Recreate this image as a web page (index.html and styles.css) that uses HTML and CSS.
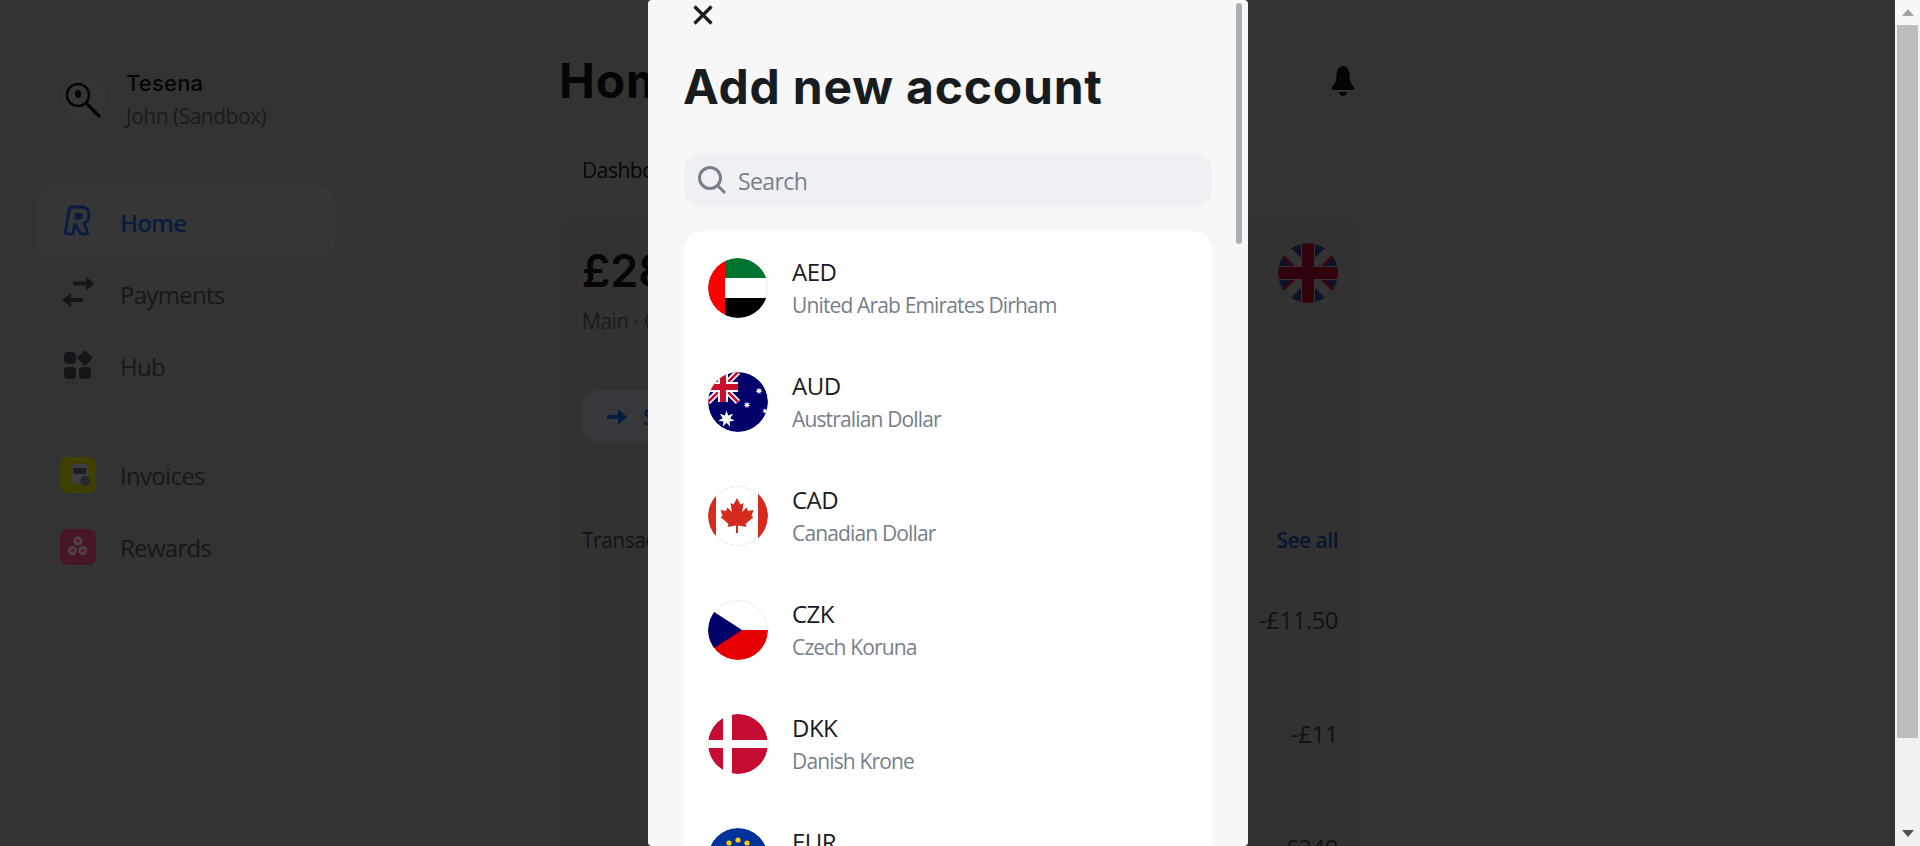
FILE: index.html
```html
<!DOCTYPE html>
<html lang="en">
  <head>
    <meta charset="UTF-8" />
    <meta name="viewport" content="width=device-width, initial-scale=1.0" />
    <title>Add new account</title>
    <link rel="stylesheet" href="styles.css">
  </head>

  <body>
    <svg class="defs" width="0" height="0">
      <clipPath id="round"><circle cx="30" cy="30" r="30" /></clipPath>
      <path id="star" d="M0-1 .195-.405.78-.62.439-.1.97.22.352.281.43.9 0 .45-.43.9-.352.281-.97.22-.439-.1-.78-.62-.195-.405Z" />
    </svg>

    <div class="window">
      <div class="page">
        <aside class="sidebar">
          <div class="profile">
            <div class="avatar">
              <svg width="48" height="48" viewBox="0 0 48 48" fill="none">
                <circle cx="17" cy="19" r="11" stroke="#050506" stroke-width="2.500" />
                <ellipse cx="17" cy="18" rx="3" ry="4" fill="#050506" />
                <path d="M25 27 39 41" stroke="#050506" stroke-width="3.500" />
              </svg>
            </div>
            <div class="profile-text">
              <div class="profile-name">Tesena</div>
              <div class="profile-sub">John (Sandbox)</div>
            </div>
          </div>

          <nav class="nav">
            <a class="nav-item active">
              <svg class="nav-icon" width="36" height="36" viewBox="2 0 36 36" fill="none">
                <path d="M14 3h9c6 0 8 4 8 8 0 4-2 7-5 8l3.500 9c.5 1.500-.5 2-1.500 2h-4c-1 0-2-.5-2.400-1.500L18 21h-1.500l-1.200 7.500c-.2 1-1 1.500-2 1.500H9c-1 0-1.800-.8-1.600-2L11 6c.2-2 1.500-3 3-3Z" stroke="#081b40" stroke-width="2.800" />
                <path d="M17.500 9H22c2 0 3.200 1 3 3s-1.800 3.500-4 3.500h-4.500Z" fill="#081b40" />
              </svg>
              Home
            </a>
            <a class="nav-item">
              <svg class="nav-icon" width="36" height="36" viewBox="2 0 36 36" fill="#14171a">
                <path d="M15 5.500h13V.5l8 7-8 7v-5H15ZM25 22H13v-5l-9 7 9 7v-5h12Z" />
              </svg>
              Payments
            </a>
            <a class="nav-item">
              <svg class="nav-icon" width="36" height="36" viewBox="2 0 36 36" fill="#14171a">
                <rect x="6" y="4" width="12" height="12" rx="4" />
                <path d="M27 4 33 10 27 16 21 10Z" stroke="#14171a" stroke-width="3" stroke-linejoin="round" />
                <rect x="6" y="19" width="12" height="12" rx="4" />
                <rect x="21" y="19" width="12" height="12" rx="4" />
              </svg>
              Hub
            </a>
          </nav>

          <nav class="nav nav-apps">
            <a class="nav-item">
              <span class="tile tile-invoices">
                <svg width="36" height="36" viewBox="0 0 36 36">
                  <rect x="12" y="7" width="16" height="20" rx="3" fill="#3c3f42" />
                  <path d="M13 11h13v6H13z" fill="#1d2023" />
                  <circle cx="25" cy="24" r="5" fill="#26292c" />
                </svg>
              </span>
              Invoices
            </a>
            <a class="nav-item">
              <span class="tile tile-rewards">
                <svg width="36" height="36" viewBox="0 0 36 36">
                  <circle cx="18" cy="12" r="4.500" fill="#47474a" />
                  <circle cx="12.500" cy="21.500" r="4.500" fill="#47474a" />
                  <circle cx="22.800" cy="21.500" r="4.500" fill="#47474a" />
                  <circle cx="18" cy="12" r="2" fill="#6b1229" />
                  <circle cx="12.500" cy="21.500" r="2" fill="#6b1229" />
                  <circle cx="22.800" cy="21.500" r="2" fill="#6b1229" />
                </svg>
              </span>
              Rewards
            </a>
          </nav>
        </aside>

        <main class="main">
          <header class="main-head">
            <h1>Home</h1>
            <svg class="bell" width="26" height="32" viewBox="0 0 26 32" fill="#040505">
              <path d="M13 1c4 0 6.500 4 6.500 9 0 5 1 8 4.500 12 1 1.200.5 3-1.200 3H3.200C1.500 25 1 23.200 2 22c3.500-4 4.500-7 4.500-12 0-5 2.500-9 6.500-9Z" />
              <path d="M9 27h8c0 2.500-2 4-4 4s-4-1.500-4-4Z" />
            </svg>
          </header>

          <div class="tabs">Dashboard</div>

          <section class="card">
            <div class="balance">
              <div>
                <div class="amount">£28,400</div>
                <div class="account">Main · GBP</div>
              </div>
              <svg class="flag" width="60" height="60" viewBox="0 0 60 60">
                <g clip-path="url(#round)">
                  <path d="M0 0h60v60H0z" fill="#0d1429" />
                  <path d="M0 8 52 60h8v-8L8 0H0ZM60 8 8 60H0v-8L52 0h8Z" fill="#333" />
                  <path d="M4 12 22 30M56 12 38 30M4 48l18-18M56 48 38 30" stroke="#3d0410" stroke-width="3" />
                  <path d="M23 0h14v60H23zM0 23h60v14H0z" fill="#333" />
                  <path d="M24 0h12v60H24zM0 24h60v12H0z" fill="#33030d" />
                </g>
              </svg>
            </div>

            <button class="send">
              <svg width="20" height="16" viewBox="0 0 20 16" fill="#081b40"><path d="M0 6h11V0l9 8-9 8v-6H0Z" /></svg>
              Send
            </button>

            <div class="tx-head">
              <span>Transactions</span>
              <a class="see-all">See all</a>
            </div>
            <div class="tx-row">-£11.50</div>
            <div class="tx-row">-£11</div>
            <div class="tx-row">-£240</div>
          </section>
        </main>

        <div class="modal">
          <div class="modal-thumb"></div>
          <div class="modal-body">
            <button class="close">
              <svg width="22" height="22" viewBox="0 0 22 22" stroke="#191c1f" stroke-width="3.200">
                <path d="M2.500 2.500 19.500 19.500M19.500 2.500 2.500 19.500" />
              </svg>
            </button>
            <h2>Add new account</h2>

            <div class="search">
              <svg width="30" height="30" viewBox="0 0 30 30" fill="none" stroke="#75808a" stroke-width="3">
                <circle cx="13" cy="13" r="10.500" />
                <path d="M20.500 20.500 28 28" />
              </svg>
              <span>Search</span>
            </div>

            <ul class="list">
              <li class="row">
                <svg class="flag" width="60" height="60" viewBox="0 0 60 60">
                  <g clip-path="url(#round)">
                    <circle class="ring" cx="30" cy="30" r="29.500" />
                    <path d="M17 0h43v20H17z" fill="#00732f" />
                    <path d="M17 40h43v20H17z" fill="#000" />
                    <path d="M0 0h17v60H0z" fill="#f00" />
                  </g>
                </svg>
                <div><div class="code">AED</div><div class="name">United Arab Emirates Dirham</div></div>
              </li>
              <li class="row">
                <svg class="flag" width="60" height="60" viewBox="0 0 60 60">
                  <g clip-path="url(#round)">
                    <path d="M0 0h60v60H0z" fill="#00006a" />
                    <path d="M0 30 30 0M0 0l30 30" stroke="#fff" stroke-width="6" />
                    <path d="M0 30 30 0M0 0l30 30" stroke="#c8102e" stroke-width="2.500" />
                    <path d="M10 0h10v30H10zM0 10h30v10H0z" fill="#fff" />
                    <path d="M12 0h6v30h-6zM0 12h30v6H0z" fill="#c8102e" />
                    <use href="#star" transform="translate(18.500 47) scale(8.500)" fill="#fff" />
                    <use href="#star" transform="translate(51 19) scale(3.600)" fill="#fff" />
                    <use href="#star" transform="translate(39 33) scale(3.600)" fill="#fff" />
                    <use href="#star" transform="translate(57 39) scale(3)" fill="#fff" />
                  </g>
                </svg>
                <div><div class="code">AUD</div><div class="name">Australian Dollar</div></div>
              </li>
              <li class="row">
                <svg class="flag" width="60" height="60" viewBox="0 0 60 60">
                  <g clip-path="url(#round)">
                    <circle class="ring" cx="30" cy="30" r="29.500" />
                    <path d="M0 0h8v60H0zM50 0h10v60H50z" fill="#d52b1e" />
                    <path d="M29 12 32.500 18.500 35.500 17 34.200 26 38.500 21.500 40 25 45.500 24 43.500 30 45.500 31 37.500 38 38.500 41 30 39.500V47H28V39.500L19.500 41 20.500 38 12.500 31 14.500 30 12.500 24 18 25 19.500 21.500 23.800 26 22.500 17 25.500 18.500Z" fill="#d52b1e" />
                  </g>
                </svg>
                <div><div class="code">CAD</div><div class="name">Canadian Dollar</div></div>
              </li>
              <li class="row">
                <svg class="flag" width="60" height="60" viewBox="0 0 60 60">
                  <g clip-path="url(#round)">
                    <circle class="ring" cx="30" cy="30" r="29.500" />
                    <path d="M0 30h60v30H0z" fill="#e60000" />
                    <path d="M0 8 34 30 0 52Z" fill="#00006a" />
                  </g>
                </svg>
                <div><div class="code">CZK</div><div class="name">Czech Koruna</div></div>
              </li>
              <li class="row">
                <svg class="flag" width="60" height="60" viewBox="0 0 60 60">
                  <g clip-path="url(#round)">
                    <circle class="ring" cx="30" cy="30" r="29.500" />
                    <path d="M0 0h15v26H0zM24 0h36v26H24zM0 34h15v26H0zM24 34h36v26H24z" fill="#c60c30" />
                  </g>
                </svg>
                <div><div class="code">DKK</div><div class="name">Danish Krone</div></div>
              </li>
              <li class="row">
                <svg class="flag" width="60" height="60" viewBox="0 0 60 60">
                  <g clip-path="url(#round)">
                    <path d="M0 0h60v60H0z" fill="#039" />
                    <g fill="#fc0">
                      <circle cx="30" cy="12" r="2.600" />
                      <circle cx="21" cy="15" r="2.600" />
                      <circle cx="39" cy="15" r="2.600" />
                      <circle cx="15" cy="21" r="2.600" />
                      <circle cx="45" cy="21" r="2.600" />
                    </g>
                  </g>
                </svg>
                <div><div class="code">EUR</div><div class="name">Euro</div></div>
              </li>
            </ul>
          </div>
        </div>
      </div>

      <div class="scrollbar">
        <div class="scroll-btn scroll-top"><span class="arrow-up"></span></div>
        <div class="scroll-thumb"></div>
        <div class="scroll-track"></div>
        <div class="scroll-btn"><span class="arrow-down"></span></div>
      </div>
    </div>
  </body>
</html>
```

FILE: styles.css
```css
* {
  box-sizing: border-box;
}

html,
body {
  height: 100%;
  margin: 0;
  overflow: hidden;
}

body {
  font-family: "Open Sans", "Noto Sans", sans-serif;
  font-size: 21px;
  letter-spacing: -0.5px;
  color: #050506;
}

.defs {
  position: absolute;
}

.window {
  display: flex;
  height: 846px;
}

.page {
  position: relative;
  flex: 1;
  display: flex;
  overflow: hidden;
  background: #333;
}

/* sidebar */
.sidebar {
  width: 558px;
  flex: none;
  padding: 75px 0 0 36px;
}

.profile {
  display: flex;
  align-items: center;
  gap: 19px;
  padding-left: 25px;
  height: 48px;
}

.avatar {
  width: 46px;
  height: 46px;
  border-radius: 50%;
  background: #353535;
}

.profile-text {
  margin-top: 4px;
}

.profile-name {
  font-family: Inter, sans-serif;
  font-size: 22px;
  font-weight: 500;
  letter-spacing: 0.2px;
  line-height: 30px;
}

.profile-sub {
  color: #1a1b1c;
  line-height: 36px;
}

.nav {
  width: 300px;
  margin-top: 63px;
}

.nav-apps {
  margin-top: 37px;
}

.nav-item {
  display: flex;
  align-items: center;
  gap: 24px;
  height: 72px;
  padding-left: 24px;
  color: #15181b;
  font-size: 24px;
  font-weight: 500;
  letter-spacing: -0.7px;
  border-radius: 18px;
}

.nav-item.active {
  background: #363636;
  color: #081b40;
  font-weight: 600;
  letter-spacing: -0.8px;
}

.nav-icon {
  flex: none;
  width: 36px;
  height: 36px;
}

.tile {
  flex: none;
  width: 36px;
  height: 36px;
  border-radius: 8px;
}

.tile-invoices {
  background: #3f3f00;
}

.tile-rewards {
  background: #481624;
}

/* main column */
.main {
  width: 804px;
  flex: none;
}

.main-head {
  display: flex;
  justify-content: space-between;
  height: 140px;
  padding: 52px 6px 0 1px;
}

h1,
h2 {
  margin: 0;
  font-family: Inter, sans-serif;
  font-size: 48px;
  font-weight: 700;
  letter-spacing: 0.8px;
  line-height: 58px;
}

.bell {
  margin-top: 13px;
}

.tabs {
  width: 300px;
  height: 53px;
  line-height: 60px;
  padding-left: 24px;
  font-weight: 500;
  border-radius: 18px;
  background: #343434;
}

.card {
  margin-top: 24px;
  padding: 26px 24px 0;
  height: 700px;
  border-radius: 18px 18px 0 0;
  background: #323232;
}

.balance {
  display: flex;
  justify-content: space-between;
  height: 147px;
}

.amount {
  font-family: Inter, sans-serif;
  font-size: 45px;
  font-weight: 600;
  letter-spacing: 0;
  line-height: 56px;
}

.account {
  margin-top: 4px;
  color: #1a1b1c;
  line-height: 36px;
}

.send {
  display: flex;
  align-items: center;
  gap: 16px;
  width: 180px;
  height: 53px;
  padding-left: 25px;
  border: 0;
  border-radius: 18px;
  background: #36383b;
  color: #081b40;
  font: inherit;
  font-weight: 600;
}

.tx-head {
  display: flex;
  justify-content: space-between;
  align-items: center;
  height: 40px;
  margin-top: 77px;
  color: #121416;
}

.see-all {
  color: #061530;
  font-weight: 600;
}

.tx-row {
  height: 114px;
  padding-top: 42px;
  text-align: right;
  font-size: 24px;
  line-height: 36px;
  color: #101112;
}

/* modal, centred over the dimmed page */
.modal {
  position: absolute;
  top: 0;
  left: 648px;
  width: 600px;
  height: 846px;
  border-radius: 4px;
  background: #f7f7f7;
  overflow: hidden;
  color: #191c1f;
}

.modal-thumb {
  position: absolute;
  top: 3px;
  right: 6px;
  width: 6px;
  height: 241px;
  border-radius: 3px;
  background: #a9b0b6;
}

.modal-body {
  padding: 0 36px;
}

.close {
  display: block;
  width: 36px;
  height: 30px;
  margin: 0 0 0 -3px;
  padding: 3px 0 0 8px;
  border: 0;
  background: none;
}

h2 {
  margin-top: 28px;
  margin-left: -1px;
}

.search {
  display: flex;
  align-items: center;
  gap: 11px;
  height: 54px;
  margin-top: 37px;
  padding-left: 13px;
  border-radius: 18px;
  background: #eef0f3;
  color: #75808a;
  font-size: 23px;
  letter-spacing: -0.6px;
}

.search span {
  margin-top: 2px;
}

.list {
  margin: 24px 0 0;
  padding: 0;
  list-style: none;
  background: #fff;
  border-radius: 18px;
}

.row {
  display: flex;
  align-items: center;
  gap: 24px;
  height: 114px;
  padding-left: 24px;
}

.flag {
  flex: none;
  border-radius: 50%;
}

.ring {
  fill: #fff;
  stroke: #e8e8e8;
}

.code {
  font-size: 24px;
  line-height: 34px;
}

.name {
  color: #75808a;
  letter-spacing: -0.85px;
  line-height: 32px;
}

/* page scrollbar */
.scrollbar {
  width: 25px;
  flex: none;
  display: flex;
  flex-direction: column;
  background: #f1f1f1;
}

.scroll-btn {
  height: 25px;
  display: flex;
  align-items: center;
  justify-content: center;
}

.scroll-top {
  background: #f8f8f8;
}

.arrow-up,
.arrow-down {
  width: 0;
  height: 0;
  border-left: 6px solid transparent;
  border-right: 6px solid transparent;
}

.arrow-up {
  border-bottom: 7px solid #a3a3a3;
}

.arrow-down {
  border-top: 7px solid #505050;
}

.scroll-thumb {
  height: 713px;
  margin: 0 2px;
  background: #bdbdbd;
}

.scroll-track {
  flex: 1;
}
```
